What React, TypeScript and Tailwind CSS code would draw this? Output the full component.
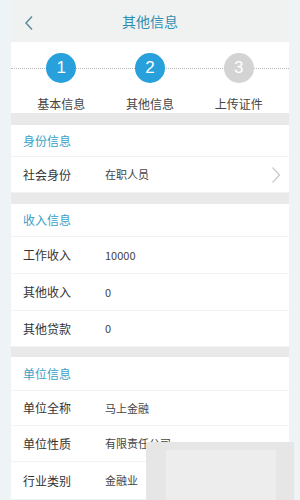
const font = { fontFamily: '"Noto Sans CJK SC", "Liberation Sans", sans-serif' };

const steps = [
  { n: "1", label: "基本信息", active: true },
  { n: "2", label: "其他信息", active: true },
  { n: "3", label: "上传证件", active: false },
];

function SectionTitle({ title, h = "h-[33px]" }: { title: string; h?: string }) {
  return (
    <div className={`${h} flex items-center pl-3 border-b border-[#f1f3f4]`}>
      <span className="text-[12px] text-[#3aa1c6]">{title}</span>
    </div>
  );
}

function Row({ label, value, arrow, h = "h-[37px]" }: { label: string; value: string; arrow?: boolean; h?: string }) {
  return (
    <div className={`${h} flex items-center pl-3 pr-2 border-b border-[#f1f3f4]`}>
      <span className="w-[82px] text-[12px] text-[#333]">{label}</span>
      <span className="flex-1 text-[11px] text-[#444]">{value}</span>
      {arrow && (
        <svg width="10" height="18" viewBox="0 0 10 18" fill="none">
          <path d="M1.5 1.5 L8.5 9 L1.5 16.5" stroke="#c9c9c9" strokeWidth="1.3" />
        </svg>
      )}
    </div>
  );
}

function Gap({ h = "h-[11px]" }: { h?: string }) {
  return <div className={`${h} bg-[#e9e9e9]`} />;
}

export default function App() {
  return (
    <div className="relative w-[300px] h-[500px] overflow-hidden bg-[#eef3f6] px-[11px]" style={font}>
      <div className="h-full bg-white flex flex-col">
        {/* Header */}
        <div className="h-[42px] shrink-0 bg-[#f0f1f1] flex items-center relative">
          <svg className="absolute left-[13px] top-[15px]" width="10" height="16" viewBox="0 0 10 16" fill="none">
            <path d="M8 1.5 L2 8 L8 14.5" stroke="#5c8c9c" strokeWidth="1.5" />
          </svg>
          <span className="mx-auto text-[14px] text-[#2f8fb2]">其他信息</span>
        </div>

        {/* Steps */}
        <div className="h-[71px] shrink-0 relative">
          <div className="absolute left-0 right-0 top-[26px] border-t border-dotted border-[#b8b8b8]" />
          <div className="relative flex pt-[11px] px-[6px]">
            {steps.map((s) => (
              <div key={s.n} className="flex-1 flex flex-col items-center">
                <div
                  className={`w-[30px] h-[30px] rounded-full flex items-center justify-center text-[17px] text-white ${
                    s.active ? "bg-[#27a0dc]" : "bg-[#d3d3d3]"
                  }`}
                  style={{ fontFamily: '"Liberation Sans", sans-serif' }}
                >
                  {s.n}
                </div>
                <span className="mt-[12px] text-[12px] text-[#444]">{s.label}</span>
              </div>
            ))}
          </div>
        </div>

        <Gap h="h-[12px]" />
        <SectionTitle title="身份信息" h="h-[32px]" />
        <Row label="社会身份" value="在职人员" arrow h="h-[36px]" />

        <Gap />
        <SectionTitle title="收入信息" h="h-[33px]" />
        <Row label="工作收入" value="10000" />
        <Row label="其他收入" value="0" />
        <Row label="其他贷款" value="0" h="h-[36px]" />

        <Gap h="h-[10px]" />
        <SectionTitle title="单位信息" h="h-[34px]" />
        <Row label="单位全称" value="马上金融" h="h-[35px]" />
        <Row label="单位性质" value="有限责任公司" h="h-[36px]" />
        <Row label="行业类别" value="金融业" h="h-[38px]" />
      </div>

      {/* blurred watermark patch */}
      <div className="absolute left-[146px] top-[442px] w-[148px] h-[58px] bg-[#e6e6e6]">
        <div className="absolute left-[20px] top-[8px] w-[110px] h-[50px] bg-[#ededed]" />
      </div>
    </div>
  );
}
